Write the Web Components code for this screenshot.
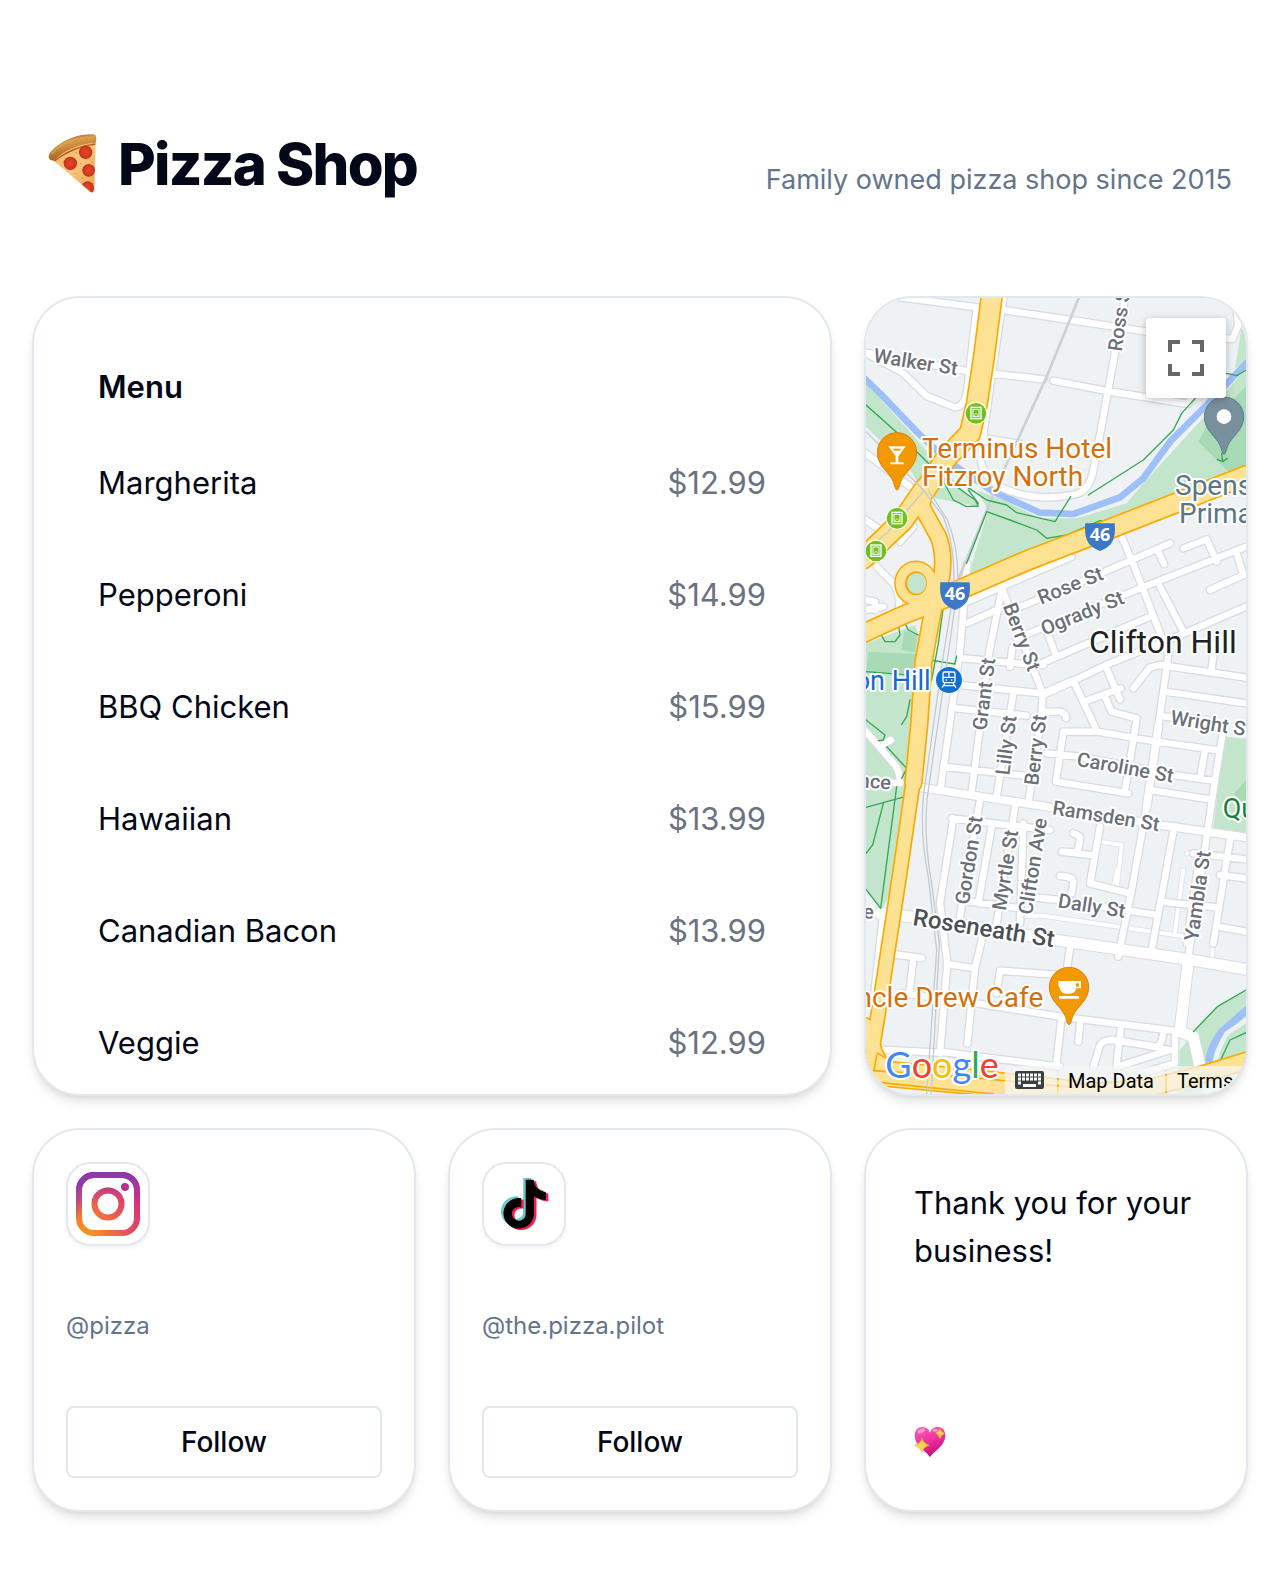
<!DOCTYPE html>
<html lang="en">
<head>
<meta charset="utf-8">
<meta name="viewport" content="width=device-width, initial-scale=1">
<title>Pizza Shop</title>
<style>
  body { margin: 0; background: #fff; color: #020817; font-family: Inter, "Liberation Sans", sans-serif; }
</style>
</head>
<body>
<pizza-page>
  <shop-header slot="header" tagline="Family owned pizza shop since 2015">Pizza Shop</shop-header>
  <bento-card class="menu"><menu-list heading="Menu"></menu-list></bento-card>
  <bento-card><street-map></street-map></bento-card>
  <bento-card><social-card handle="@pizza"><instagram-logo slot="logo"></instagram-logo></social-card></bento-card>
  <bento-card><social-card handle="@the.pizza.pilot"><tiktok-logo slot="logo"></tiktok-logo></social-card></bento-card>
  <bento-card><thanks-note>Thank you for your business!</thanks-note></bento-card>
</pizza-page>

<script>
const define = (name, render) => customElements.define(name, class extends HTMLElement {
  constructor() { super(); this.attachShadow({ mode: 'open' }); }
  connectedCallback() { this.shadowRoot.innerHTML = '<style>*{box-sizing:border-box}</style>' + render(this); }
});

define('pizza-page', () => `
<style>
  :host { display: block; padding-bottom: 64px; }
  main { display: grid; grid-template-columns: repeat(3, minmax(0, 1fr)); gap: 32px; padding: 0 32px; }
  ::slotted(bento-card) { min-width: 0; }
  ::slotted(bento-card.menu) { grid-column: span 2; }
  ::slotted(bento-card:not(:nth-of-type(2))) { aspect-ratio: 1; }
</style>
<slot name="header"></slot>
<main><slot></slot></main>`);

define('shop-header', el => `
<style>
  :host { display: block; }
  header { display: flex; justify-content: space-between; align-items: flex-end; padding: 134px 48px 102px; }
  h1 { display: flex; align-items: center; gap: 20px; margin: 0; font-size: 58px; line-height: 60px; font-weight: 800; letter-spacing: -0.03em; }
  svg { width: 50px; height: 60px; flex: none; }
  p { margin: 0; font-size: 27px; line-height: 28px; color: #64748b; }
</style>
<header>
  <h1>
    <svg viewBox="0 0 150 180" aria-hidden="true">
      <defs>
        <linearGradient id="crust" x1="0" y1="0" x2=".35" y2="1"><stop offset="0" stop-color="#8f5a1c"/><stop offset=".4" stop-color="#d99b48"/><stop offset="1" stop-color="#9a5a1a"/></linearGradient>
        <linearGradient id="cheese" x1="0" y1="0" x2="1" y2="1"><stop offset="0" stop-color="#efb765"/><stop offset=".5" stop-color="#f8c67c"/><stop offset="1" stop-color="#eda052"/></linearGradient>
        <radialGradient id="pep"><stop offset="0" stop-color="#e0442a"/><stop offset=".7" stop-color="#d63a1e"/><stop offset="1" stop-color="#b8301a"/></radialGradient>
        <clipPath id="slice"><path d="M12 76Q70 30 143 26L139 172Q136 178 128 174Z"/></clipPath>
      </defs>
      <path d="M12 76Q70 30 143 26L139 172Q136 178 128 174Z" fill="url(#cheese)"/>
      <g clip-path="url(#slice)">
        <path d="M14 84Q76 36 144 30" fill="none" stroke="#c9551d" stroke-width="5"/>
        <circle cx="113" cy="55" r="20" fill="url(#pep)"/><circle cx="67" cy="88" r="20" fill="url(#pep)"/>
        <circle cx="122" cy="109" r="19" fill="url(#pep)"/><circle cx="119" cy="161" r="19" fill="url(#pep)"/>
        <g fill="#dc7b35"><circle cx="85" cy="56" r="2"/><circle cx="98" cy="89" r="2"/><circle cx="82" cy="118" r="2"/><circle cx="132" cy="84" r="2"/><circle cx="103" cy="132" r="2"/><circle cx="45" cy="84" r="2"/></g>
      </g>
      <path d="M2 68C0 56 30 26 72 11C100 1 128-1 141 2C146 4 145 20 143 27C92 30 54 46 17 79C11 82 2 75 2 68Z" fill="url(#crust)"/>
      <path d="M12 58C42 24 91 8 137 9" fill="none" stroke="#e3ad60" stroke-width="5" stroke-linecap="round" opacity=".6"/>
    </svg>
    <span><slot></slot></span>
  </h1>
  <p>${el.getAttribute('tagline')}</p>
</header>`);

define('bento-card', () => `
<style>
  :host { display: flex; flex-direction: column; box-sizing: border-box; overflow: hidden; background: #fff;
    border: 2px solid #e2e8f0; border-radius: 48px;
    box-shadow: 0 8px 12px -2px rgb(0 0 0 / .1), 0 4px 8px -4px rgb(0 0 0 / .1); }
  ::slotted(*) { flex: 1; min-height: 0; }
</style>
<slot></slot>`);

const MENU = [['Margherita', '$12.99'], ['Pepperoni', '$14.99'], ['BBQ Chicken', '$15.99'], ['Hawaiian', '$13.99'], ['Canadian Bacon', '$13.99'], ['Veggie', '$12.99']];
define('menu-list', el => `
<style>
  :host { display: block; padding: 65px 64px 0; overflow: hidden; }
  table { width: 100%; border-collapse: collapse; font-size: 31px; line-height: 48px; }
  caption { text-align: left; font-weight: 600; padding-bottom: 16px; }
  th, td { padding: 32px 0; font-weight: 400; text-align: left; }
  td { text-align: right; color: #6b7280; }
</style>
<table><caption>${el.getAttribute('heading')}</caption><tbody>
${MENU.map(([name, price]) => `<tr><th scope="row">${name}</th><td>${price}</td></tr>`).join('')}
</tbody></table>`);

define('social-card', el => `
<style>
  :host { display: flex; flex-direction: column; justify-content: space-between; padding: 32px; }
  .logo { width: 84px; height: 84px; padding: 8px; border: 2px solid #e2e8f0; border-radius: 24px; box-shadow: 0 2px 4px rgb(0 0 0 / .05); }
  p { margin: 0; font-size: 24px; line-height: 34px; color: #64748b; }
  button { height: 72px; width: 100%; border: 2px solid #e2e8f0; border-radius: 8px; background: #fff; color: #020817;
    font: 500 28px/40px Inter, "Liberation Sans", sans-serif; cursor: pointer; }
</style>
<div class="logo"><slot name="logo"></slot></div>
<p>${el.getAttribute('handle')}</p>
<button type="button">Follow</button>`);

define('instagram-logo', () => `
<style>:host, svg { display: block; width: 64px; height: 64px; }</style>
<svg viewBox="0 0 64 64" role="img" aria-label="Instagram">
  <defs>
    <radialGradient id="warm" gradientUnits="userSpaceOnUse" cx="8.500" cy="64.300" r="83.500">
      <stop offset=".09" stop-color="#fa8f21"/><stop offset=".78" stop-color="#d82d7e"/>
    </radialGradient>
    <radialGradient id="cool" gradientUnits="userSpaceOnUse" cx="38.800" cy="67.200" r="65.800">
      <stop offset=".64" stop-color="#8c3aaa" stop-opacity="0"/><stop offset="1" stop-color="#8c3aaa"/>
    </radialGradient>
    <g id="camera"><rect x="3" y="3" width="58" height="58" rx="15"/><circle cx="32" cy="32" r="13.500"/></g>
  </defs>
  <g fill="none" stroke-width="6"><use href="#camera" stroke="url(#warm)"/><use href="#camera" stroke="url(#cool)"/></g>
  <circle cx="49" cy="15" r="4" fill="#b2328f"/>
</svg>`);

const NOTE = 'M12.525.02c1.31-.02 2.61-.01 3.91-.02.08 1.53.63 3.09 1.75 4.17 1.12 1.11 2.7 1.62 4.24 1.79v4.03c-1.44-.05-2.89-.35-4.2-.97-.57-.26-1.1-.59-1.62-.93-.01 2.92.01 5.84-.02 8.75-.08 1.4-.54 2.79-1.35 3.94-1.31 1.92-3.58 3.17-5.91 3.21-1.43.08-2.86-.31-4.08-1.03-2.02-1.19-3.44-3.37-3.65-5.71-.02-.5-.03-1-.01-1.49.18-1.9 1.12-3.72 2.58-4.96 1.66-1.44 3.98-2.13 6.15-1.72.02 1.48-.04 2.96-.04 4.44-.99-.32-2.15-.23-3.02.37-.63.41-1.11 1.04-1.36 1.75-.21.51-.15 1.07-.14 1.61.24 1.64 1.82 3.02 3.5 2.87 1.12-.01 2.19-.66 2.77-1.61.19-.33.4-.67.41-1.06.1-1.79.06-3.57.07-5.36.01-4.03-.01-8.05.02-12.07z';
define('tiktok-logo', () => `
<style>:host, svg { display: block; width: 64px; height: 64px; }</style>
<svg viewBox="0 0 64 64" role="img" aria-label="TikTok">
  <path fill="#69c9d0" transform="translate(5.8 6) scale(2.03)" d="${NOTE}"/>
  <path fill="#ee1d52" transform="translate(10.8 9.3) scale(2.03)" d="${NOTE}"/>
  <path fill="#000" transform="translate(8.3 7.8) scale(2.03)" d="${NOTE}"/>
</svg>`);

define('thanks-note', () => `
<style>
  :host { display: flex; flex-direction: column; justify-content: space-between; padding: 49px 48px 52px; font-size: 31px; line-height: 48px; }
  p { margin: 0; }
  svg { display: block; width: 32px; height: 32px; }
</style>
<p><slot></slot></p>
<svg viewBox="0 0 96 96" aria-hidden="true">
  <defs><linearGradient id="h" x1=".2" y1="0" x2=".6" y2="1"><stop offset="0" stop-color="#f95fb6"/><stop offset=".5" stop-color="#ee2fa3"/><stop offset="1" stop-color="#c8086e"/></linearGradient></defs>
  <path d="M48 94C42 78 3 62 2 29C2 12 13 2 26 3C38 3 46 12 48 20C50 12 58 3 70 3C84 2 94 12 94 28C94 61 56 78 48 94Z" fill="url(#h)"/>
  <ellipse cx="22" cy="15" rx="12" ry="6" fill="#ffb0df" opacity=".75" transform="rotate(-25 22 15)"/>
  <ellipse cx="64" cy="13" rx="9" ry="5" fill="#ffb0df" opacity=".7"/>
  <g fill="#fbd24b" stroke="#e9a02c" stroke-width="1.5"><path d="M24 36Q27 52 46 58Q29 62 24 80Q19 63 2 58Q19 53 24 36Z"/><path d="M78 7Q81 18 92 22Q82 26 78 38Q74 26 65 22Q75 18 78 7Z"/></g>
</svg>`);

/* Map geometry: three units to one CSS pixel */
const STREETS = `M120 22L360 53M430 60L630 90L860 125L1118 147L1135 105L1130 60M350 55L322 300Q314 350 285 352L200 318L130 250L20 190
M18 188L330 245M390 250L550 268M580 272L740 303L985 342L995 320M430 24L400 220L372 420L362 510Q370 560 420 590Q520 640 650 612Q690 600 700 540L730 380L795 24M340 440L480 462
M18 490L150 590M160 710L120 755M18 690L60 720M50 830L100 880Q120 910 117 950M18 930L45 935L45 960M18 960L70 950
M322 820L300 1080L285 1190L242 1495M310 940L635 800M785 740L825 835L885 990L925 1095L895 1310L860 1550L815 1800L775 2000
M470 955L700 860L930 760M970 775L1040 748L1070 815M470 1045L840 895L1158 770M320 1000L420 955M425 900L385 1100L360 1310L335 1505
M900 890L970 1025M893 780L912 822M1050 900L1150 855L1130 790M540 1122L870 980M450 1130L457 1072M560 1020L585 1090M550 1212L640 1172L750 1120L950 1040L1158 950
M310 1105L470 1120L550 1125M428 900L548 1210L545 1270L505 1540M1065 1060L1055 1135M820 1195L870 1132L900 1125L1158 1163
M300 1185L545 1210M290 1255L500 1277M560 1265L600 1265Q620 1270 618 1285M640 1172L712 1325M742 1140L780 1228M680 1232L782 1195M735 1220L755 1265L830 1285L820 1350L795 1500
M915 1205L1158 1240M915 1280L1040 1290M710 1325L610 1325L588 1475L805 1510M710 1325L890 1355L1080 1382M560 1390L660 1400L940 1455L1060 1472M1035 1382L1020 1465M870 1500L1050 1528
M1088 1330L1065 1470L1040 1640L985 2000M460 1210L410 1520M250 1430L490 1457M360 1530L330 1700L300 1880M275 1585L400 1600L570 1620M280 1585L240 1840L262 2020L240 2290M395 1610L355 1840M465 1550L410 1900
M640 1630Q662 1635 660 1650L652 1687L605 1685L705 1697M720 1610L690 1780L810 1810M940 1625L875 1980M1000 1690L1158 1708M1110 1650L1060 1960M600 1758Q640 1760 640 1775L635 1810
M18 1325L105 1425Q120 1445 120 1480L18 1470M65 1368L92 1350M330 1835L480 1855M500 1820L600 1830L880 1873M900 1835L1070 1852M1080 1755L1158 1765M1075 1910L1158 1925
M370 1930L345 2035L322 2260M260 2022L345 2035M95 1992L185 2004M160 2005L148 2110M630 1975L620 2040M410 2110L420 2042L600 2055M130 2110L350 2140L600 2180L900 2217L960 2225
M605 2180L588 2330M660 2200L655 2255M782 2220L770 2320M700 2330L720 2265Q730 2250 755 2250L890 2270Q905 2265 910 2230M770 2330L930 2280L780 2252M240 2285L600 2330M75 2280L240 2288M70 1870L40 2140M945 2240L945 2320L860 2345
M490 1600L480 1900M1020 1690L980 1960`;
const LANES = `M720 1655L785 1665L770 1800M480 1880L540 1876L980 1940M770 1740L760 1800M970 1740L945 1925M980 1690L1000 1690M1060 1960L1055 2015`;
const MAJOR = `M180 1492L560 1550L900 1605L1158 1642M895 1310L860 1550M550 1212L640 1172`;
const AVENUE = `M60 1870L150 1880L620 1955L985 2008L1158 2038M985 2010L960 2225L1000 2240L1022 2340`;
const HIGHWAYS = [
  [58, 'M395 20L372 200L350 345L330 430L262 500L195 600'],
  [58, 'M195 595L130 690L10 805'],
  [44, 'M195 600L185 650L235 740Q255 790 245 860L215 960'],
  [54, 'M285 905L500 812L720 728L1160 556'],
  [50, 'M10 1030L130 975L285 915'],
  [46, 'M225 930L208 1020L190 1120L178 1300L160 1480'],
  [38, 'M160 1470L118 1760L58 2150L40 2260'],
  [70, 'M10 2220L30 2290L60 2350L330 2375L640 2410'],
  [46, 'M640 2410L860 2395L1020 2355L1160 2312']
];
const TRAM = (x, y) => `<g transform="translate(${x} ${y})"><circle r="34" fill="#fff"/><circle r="31" fill="#72bf20"/><g fill="none" stroke="#fff" stroke-width="4"><rect x="-15" y="-18" width="30" height="34"/><rect x="-9" y="-12" width="18" height="22" stroke-width="3"/><path d="M-6 8L0 0L8 10" stroke-width="2"/></g></g>`;
const PIN = (x, y, fill, edge, art) => `<g transform="translate(${x} ${y})"><path d="M0 113C-5 113-6 101-12 86C-22 60-59 42-59 0A59 59 0 0 1 59 0C59 42 22 60 12 86C6 101 5 113 0 113Z" fill="${fill}" stroke="${edge}" stroke-width="3"/>${art}</g>`;
const SHIELD = (x, y) => `<g transform="translate(${x} ${y})"><path d="M-44-35H44C48 10 38 35 0 48C-38 35-48 10-44-35Z" fill="#3b78c8"/><text class="route" y="19">46</text></g>`;
const LABEL = (x, y, angle, text, cls = 'st') => `<text class="${cls}" transform="translate(${x} ${y}) rotate(${angle})">${text}</text>`;

define('street-map', () => `
<style>
  :host { display: block; position: relative; overflow: hidden; background: #eef2f4; border-radius: 46px; font-family: Roboto, "Liberation Sans", sans-serif; }
  .map { position: absolute; inset: 0; width: 100%; height: 100%; display: block; }
  .map text { font-family: Roboto, "Liberation Sans", sans-serif; paint-order: stroke; stroke: #fff; stroke-width: 12px; stroke-linejoin: round; font-size: 60px; }
  .map .st { fill: #6b7078; font-weight: 500; }
  .map .main { fill: #4b4f56; font-weight: 500; font-size: 72px; }
  .map .place { font-size: 84px; fill: #d66f0b; }
  .map .school { font-size: 84px; fill: #5b7683; }
  .map .station { font-size: 81px; fill: #1967d2; text-anchor: end; }
  .map .park { font-size: 81px; fill: #188038; }
  .map .suburb { font-size: 96px; fill: #202124; }
  .map .route { font: 700 54px "Open Sans", sans-serif; fill: #fff; stroke: none; text-anchor: middle; }
  .map .logo { font: 400 108px Lato, sans-serif; stroke-width: 12px; }
  .road { fill: none; stroke-linejoin: round; stroke-linecap: round; }
  .full { position: absolute; top: 20px; right: 20px; width: 80px; height: 80px; padding: 22px; border: 0; border-radius: 4px; background: #fff; box-shadow: 0 2px 8px rgb(0 0 0 / .25); cursor: pointer; }
  .full svg { display: block; width: 36px; height: 36px; }
  footer { position: absolute; right: 0; bottom: 0; display: flex; gap: 2px; height: 28px; width: 241px; }
  footer > * { background: rgb(245 245 245 / .72); height: 28px; border: 0; padding: 0; color: #000; font: 20px/30px Roboto, "Liberation Sans", sans-serif; white-space: nowrap; text-decoration: none; }
  .keys { width: 52px; padding: 4px 12px 4px 10px; } .keys svg { display: block; width: 30px; height: 18px; }
  .data { width: 106px; padding-right: 2px; text-align: center; } .terms { flex: 1; padding-left: 10px; }
</style>
<svg class="map" viewBox="18 24 1140 2388" preserveAspectRatio="xMidYMid slice" role="img" aria-label="Map of Clifton Hill">
  <rect x="0" y="0" width="1200" height="2440" fill="#eef2f4"/>
  <g fill="#c3e5cb">
    <path d="M18 280L150 425L215 500L300 590L360 650L200 620L150 540L18 410Z"/>
    <path d="M320 872L385 660L350 600L430 630L540 685L650 685L800 640L850 580L1060 350L1158 235V560L945 615Z"/>
    <path d="M1145 110L1158 140V215L1125 235Z"/>
    <path d="M18 1060L165 1005L190 1090L140 1480L95 1800L65 1862L18 1800Z"/>
    <path d="M1090 1340L1158 1346V1638L1060 1615Z"/>
    <path d="M1000 2230L1070 2150L1158 2100V2330L1070 2330L1020 2412H950L960 2280Z"/>
  </g>
  <g fill="#a8dab5"><path d="M1158 290L1050 390L1015 455L1110 550L1158 530Z"/><path d="M26 1085L168 1092L160 1150H18ZM132 1024L172 1030L165 1087L125 1080Z"/><path d="M1158 1470L1122 1512L1158 1550Z"/></g>
  <path class="road" d="M10 262L60 310L170 425L260 510L400 605L540 668L640 672L780 622L850 565L930 455L1040 345L1160 218" stroke="#9dc0f9" stroke-width="20"/>
  <path class="road" d="M1160 2160L1085 2225Q1045 2280 1045 2330" stroke="#9dc0f9" stroke-width="22"/>
  <path class="road" d="M1160 2190L1100 2230Q1070 2280 1065 2320" stroke="#eef2f4" stroke-width="14"/>
  <path class="road" d="${LANES}" stroke="#e2e4e8" stroke-width="17"/><path class="road" d="${LANES}" stroke="#fff" stroke-width="11"/>
  <path class="road" d="${STREETS}" stroke="#d9dce2" stroke-width="27"/>
  <path class="road" d="${MAJOR}" stroke="#d9dce2" stroke-width="30"/>
  <path class="road" d="${AVENUE}" stroke="#d9dce2" stroke-width="39"/>
  <path class="road" d="${STREETS}" stroke="#fff" stroke-width="19"/>
  <path class="road" d="${MAJOR}" stroke="#fff" stroke-width="23"/>
  <path class="road" d="${AVENUE}" stroke="#fff" stroke-width="33"/>
  <path class="road" d="M658 20L560 260L420 565L290 880" stroke="#cdd1d6" stroke-width="8"/>
  <g class="road" stroke="#34a853" stroke-width="4">
    <path d="M18 345L130 445L240 555L280 630L320 650L355 648L345 630L290 590M320 820L380 665L450 690L530 720L560 745L620 735L720 692L765 700M320 590L380 630L440 645L470 668L585 695L632 620M685 615L850 510L940 420L965 370L1010 320L1100 250L1130 257L1158 240M1085 490L1088 515M1072 508L1088 515L1102 505M325 600L355 640"/>
    <path d="M60 1028L75 1055L105 1055L120 1035L115 1005M135 1000L145 1020L175 1035M250 950L235 1060L215 1170M208 1110L285 1122L290 1098M18 1145L210 1160M150 1230L140 1280L125 1303M18 1290L75 1335L70 1350L55 1352M80 1370L140 1435L125 1465M18 1552L135 1520M70 1540L38 1665L18 1690M110 1490L62 1855L18 1798M1000 2225L1072 2150L1158 2100M1075 2325L1110 2250L1158 2228"/>
  </g>
  ${HIGHWAYS.map(([w, d]) => `<path class="road" d="${d}" stroke="#f9ab00" stroke-width="${w + 10}"/>`).join('')}
  <ellipse cx="168" cy="880" rx="47" ry="50" fill="none" stroke="#f9ab00" stroke-width="37"/>
  ${HIGHWAYS.map(([w, d]) => `<path class="road" d="${d}" stroke="#fde293" stroke-width="${w}"/>`).join('')}
  <ellipse cx="168" cy="880" rx="47" ry="50" fill="#f9ab00" stroke="#fde293" stroke-width="28"/>
  <ellipse cx="170" cy="880" rx="29" ry="31" fill="#c3e5cb"/>
  <path class="road" d="M40 2342L330 2362L640 2392M62 2378L400 2412M50 2296L42 2340M52 2290L90 2310" stroke="#f9ab00" stroke-width="5"/>
  <g class="road" stroke="#c6cad0" stroke-width="4">
    <path d="M18 425L190 600L250 680Q290 780 280 910L248 1110L190 1520Q180 1640 205 1760L230 1980L200 2412M205 600L262 690Q300 780 292 900L262 1110L202 1520Q190 1640 215 1780L238 1960L214 2412M190 605L80 730L18 780"/>
  </g>
  <path class="road" d="M305 940L635 802" stroke="#fff" stroke-width="14"/>
  ${TRAM(348, 370)}${TRAM(111, 685)}${TRAM(48, 783)}
  ${SHIELD(720, 735)}${SHIELD(285, 912)}
  ${LABEL(38, 216, 9, 'Walker St')}${LABEL(785, 186, -82, 'Ross St')}
  ${LABEL(543, 944, -22, 'Rose St')}${LABEL(553, 1037, -22, 'Ogrady St')}${LABEL(428, 948, 69, 'Berry St')}
  ${LABEL(379, 1323, -83, 'Grant St')}${LABEL(448, 1457, -83, 'Lilly St')}${LABEL(534, 1488, -83, 'Berry St')}
  ${LABEL(929, 1302, 9, 'Wright St')}${LABEL(648, 1427, 10, 'Caroline St')}${LABEL(575, 1573, 9, 'Ramsden St')}
  ${LABEL(-5, 1492, 4, 'nce')}${LABEL(8, 1885, 3, 'e')}
  ${LABEL(326, 1846, -81, 'Gordon St')}${LABEL(437, 1864, -81, 'Myrtle St')}${LABEL(516, 1876, -81, 'Clifton Ave')}
  ${LABEL(1014, 1955, -82, 'Yambla St')}${LABEL(592, 1852, 9, 'Dally St')}${LABEL(156, 1905, 9, 'Roseneath St', 'main')}
  <text class="place" x="186" y="504">Terminus Hotel</text><text class="place" x="186" y="588">Fitzroy North</text>
  <text class="school" x="945" y="615">Spens</text><text class="school" x="957" y="699">Prima</text>
  <text class="suburb" x="687" y="1088">Clifton Hill</text>
  <text class="station" x="212" y="1199">on Hill</text>
  <text class="park" x="1088" y="1585">Qu</text>
  <text class="place" x="550" y="2150" text-anchor="end">ncle Drew Cafe</text>
  <circle cx="267" cy="1170" r="41" fill="#fff"/><circle cx="267" cy="1170" r="39" fill="#0f71d0"/>
  <g transform="translate(267 1167)" fill="none" stroke="#fff" stroke-width="4"><rect x="-18" y="-21" width="36" height="32" rx="5"/><path d="M-18-5H18M0-19V-5M-12 13L-21 26M12 13L21 26M-17 20H17"/><path d="M-10 3H-6M6 3H10"/></g>
  ${PIN(111, 487, '#f29900', '#e37e0a', '<path d="M-26-18H26L4 12V30H20V36H-20V30H-4V12Z" fill="#fff"/><path d="M-13-11H13L8-5H-8Z" fill="#f29900"/>')}
  ${PIN(1092, 380, '#78909c', '#607d8b', '<circle r="22" fill="#fff"/>')}
  ${PIN(627, 2091, '#f29900', '#e37e0a', '<path d="M-33-18H36V4H22Q18 20 2 20H-10Q-31 18-33-18ZM-30 27H30V35H-30Z" fill="#fff"/><rect x="21" y="-11" width="9" height="10" fill="#f29900"/>')}
  <text class="logo" x="76" y="2364"><tspan fill="#4285f4">G</tspan><tspan fill="#ea4335">o</tspan><tspan fill="#fbbc04">o</tspan><tspan fill="#4285f4">g</tspan><tspan fill="#34a853">l</tspan><tspan fill="#ea4335">e</tspan></text>
</svg>
<button class="full" type="button" aria-label="Toggle fullscreen view"><svg viewBox="0 0 18 18" fill="#666"><path d="M0 0v6h2V2h4V0H0zm16 0h-4v2h4v4h2V0h-2zm0 16h-4v2h6v-6h-2v4zM2 12H0v6h6v-2H2v-4z"/></svg></button>
<footer>
  <button class="keys" type="button" aria-label="Keyboard shortcuts"><svg viewBox="0 0 30 18"><rect width="29" height="18" rx="2" fill="#3c4043"/><path d="M3 4H26M3 8H26M3 12H6M23 12H26" stroke="#fff" stroke-width="3" stroke-dasharray="3 1"/><path d="M8 14.500H21" stroke="#fff" stroke-width="3"/></svg></button>
  <button class="data" type="button">Map Data</button>
  <a class="terms" href="#terms">Terms</a>
</footer>`);
</script>
</body>
</html>
